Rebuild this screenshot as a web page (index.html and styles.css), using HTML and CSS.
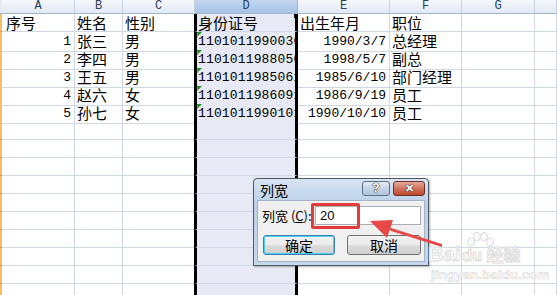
FILE: index.html
```html
<!DOCTYPE html>
<html lang="zh">
<head>
<meta charset="utf-8">
<title>列宽</title>
<link rel="stylesheet" href="styles.css">
</head>
<body>
<div class="sheet">
  <div class="row head">
    <div class="c rh"></div><div class="c">A</div><div class="c">B</div><div class="c">C</div><div class="c d">D</div><div class="c">E</div><div class="c">F</div><div class="c">G</div><div class="c"></div>
  </div>
  <div class="row">
    <div class="c rh"></div><div class="c a">序号</div><div class="c">姓名</div><div class="c">性别</div><div class="c d first">身份证号</div><div class="c">出生年月</div><div class="c">职位</div><div class="c"></div><div class="c"></div>
  </div>
  <div class="row">
    <div class="c rh"></div><div class="c a num r">1</div><div class="c">张三</div><div class="c">男</div><div class="c d num mark">1101011990030</div><div class="c num r">1990/3/7</div><div class="c">总经理</div><div class="c"></div><div class="c"></div>
  </div>
  <div class="row">
    <div class="c rh"></div><div class="c a num r">2</div><div class="c">李四</div><div class="c">男</div><div class="c d num mark">1101011988050</div><div class="c num r">1998/5/7</div><div class="c">副总</div><div class="c"></div><div class="c"></div>
  </div>
  <div class="row">
    <div class="c rh"></div><div class="c a num r">3</div><div class="c">王五</div><div class="c">男</div><div class="c d num mark">1101011985061</div><div class="c num r">1985/6/10</div><div class="c">部门经理</div><div class="c"></div><div class="c"></div>
  </div>
  <div class="row">
    <div class="c rh"></div><div class="c a num r">4</div><div class="c">赵六</div><div class="c">女</div><div class="c d num mark">1101011986091</div><div class="c num r">1986/9/19</div><div class="c">员工</div><div class="c"></div><div class="c"></div>
  </div>
  <div class="row">
    <div class="c rh"></div><div class="c a num r">5</div><div class="c">孙七</div><div class="c">女</div><div class="c d num mark">1101011990101</div><div class="c num r">1990/10/10</div><div class="c">员工</div><div class="c"></div><div class="c"></div>
  </div>
  <div class="row"><div class="c rh"></div><div class="c"></div><div class="c"></div><div class="c"></div><div class="c d"></div><div class="c"></div><div class="c"></div><div class="c"></div><div class="c"></div></div>
  <div class="row"><div class="c rh"></div><div class="c"></div><div class="c"></div><div class="c"></div><div class="c d"></div><div class="c"></div><div class="c"></div><div class="c"></div><div class="c"></div></div>
  <div class="row"><div class="c rh"></div><div class="c"></div><div class="c"></div><div class="c"></div><div class="c d"></div><div class="c"></div><div class="c"></div><div class="c"></div><div class="c"></div></div>
  <div class="row"><div class="c rh"></div><div class="c"></div><div class="c"></div><div class="c"></div><div class="c d"></div><div class="c"></div><div class="c"></div><div class="c"></div><div class="c"></div></div>
  <div class="row"><div class="c rh"></div><div class="c"></div><div class="c"></div><div class="c"></div><div class="c d"></div><div class="c"></div><div class="c"></div><div class="c"></div><div class="c"></div></div>
  <div class="row"><div class="c rh"></div><div class="c"></div><div class="c"></div><div class="c"></div><div class="c d"></div><div class="c"></div><div class="c"></div><div class="c"></div><div class="c"></div></div>
  <div class="row"><div class="c rh"></div><div class="c"></div><div class="c"></div><div class="c"></div><div class="c d"></div><div class="c"></div><div class="c"></div><div class="c"></div><div class="c"></div></div>
  <div class="row"><div class="c rh"></div><div class="c"></div><div class="c"></div><div class="c"></div><div class="c d"></div><div class="c"></div><div class="c"></div><div class="c"></div><div class="c"></div></div>
  <div class="row"><div class="c rh"></div><div class="c"></div><div class="c"></div><div class="c"></div><div class="c d"></div><div class="c"></div><div class="c"></div><div class="c"></div><div class="c"></div></div>
  <div class="row"><div class="c rh"></div><div class="c"></div><div class="c"></div><div class="c"></div><div class="c d"></div><div class="c"></div><div class="c"></div><div class="c"></div><div class="c"></div></div>
</div>

<div class="dialog">
  <div class="titlebar">
    <span class="title">列宽</span>
    <div class="tb-btns">
      <span class="tb-btn help">?</span>
      <span class="tb-btn close">✕</span>
    </div>
  </div>
  <div class="client">
    <div class="field">
      <span class="label">列宽 (<u>C</u>):</span>
      <div class="input">20</div>
    </div>
    <div class="actions">
      <button class="btn ok">确定</button>
      <button class="btn cancel">取消</button>
    </div>
  </div>
  <div class="highlight"></div>
</div>

<svg class="arrow" width="557" height="295" viewBox="0 0 557 295">
  <polygon points="370,221 393,220 387,238" fill="#e84848"/>
  <polygon points="388,227 391,231 442,247 442,244" fill="#e84848"/>
</svg>

<div class="watermark">
  <svg class="paw" width="30" height="26" viewBox="0 0 30 26">
    <g fill="#fbfbfb" stroke="#e0e0e0" stroke-width="1.2">
      <ellipse cx="6" cy="10" rx="3.5" ry="4"/>
      <ellipse cx="12" cy="4.5" rx="3.5" ry="4"/>
      <ellipse cx="19" cy="4.5" rx="3.5" ry="4"/>
      <ellipse cx="25" cy="10" rx="3.5" ry="4"/>
    </g>
  </svg>
  <div class="wm-main"><span class="bai">Bai</span><span class="du">du</span><span class="jy">经验</span></div>
  <div class="wm-url">jingyan.baidu.com</div>
</div>
</body>
</html>
```

FILE: styles.css
```css
html, body {
  margin: 0;
  padding: 0;
  background: #fff;
  overflow: hidden;
}
body {
  width: 557px;
  height: 295px;
  position: relative;
  font-family: "Noto Sans CJK SC", "Liberation Sans", sans-serif;
}
.sheet {
  display: flex;
  flex-direction: column;
}
.row {
  display: grid;
  grid-template-columns: 2px 73px 48px 72px 103px 92px 72px 73px 22px;
  height: 18px;
}
.c {
  box-sizing: border-box;
  border-right: 1px solid #d0d7e5;
  border-bottom: 1px solid #d0d7e5;
  font-size: 15px;
  line-height: 17px;
  color: #000;
  padding-left: 2px;
  white-space: nowrap;
}
.c.a { padding-left: 4px; }
.c.r { text-align: right; padding-right: 3px; }
.c.num {
  font-family: "Liberation Mono", monospace;
  font-size: 13px;
  line-height: 19px;
}
.c.rh {
  background: #f7bd66;
  border-right: none;
  border-bottom: 1px solid #e39a38;
  padding: 0;
}
.c.d {
  background: #e7eaf4;
  border-left: 2px solid #000;
  border-right: 3px solid #000;
  box-shadow: -1px 0 0 #000;
  padding-left: 1px;
  position: relative;
}
.c.d.num { letter-spacing: 0.15px; }
.c.d.mark { overflow: hidden; }
.c.d.mark::before {
  content: "";
  position: absolute;
  left: 0;
  top: 0;
  border-top: 5px solid #1f8a1f;
  border-right: 5px solid transparent;
}
.c.d.mark::after {
  content: "";
  position: absolute;
  left: 0;
  top: 1px;
  width: 1px;
  height: 4px;
  background: #d070c0;
}
.c.d.first::after {
  content: "";
  position: absolute;
  right: -3px;
  top: 0;
  width: 4px;
  height: 4px;
  background: #000;
}

/* header row */
.row.head { height: 14px; }
.row.head .c {
  background: linear-gradient(#f5f8fc, #e2e9f3);
  border-right: 1px solid #c5d1e0;
  border-bottom: 1px solid #9eb6ce;
  font-family: "Liberation Mono", monospace;
  font-size: 12px;
  line-height: 13px;
  color: #27415f;
  text-align: center;
  padding: 0;
}
.row.head .c.rh {
  background: #e4eaf3;
  border-right: none;
}
.row.head .c.d {
  background: linear-gradient(#c2d6ef, #a8c3e6);
  border-left: none;
  border-right: 1px solid #9eb6ce;
  box-shadow: none;
}

/* dialog */
.dialog {
  position: absolute;
  left: 253px;
  top: 178px;
  width: 176px;
  height: 88px;
  box-sizing: border-box;
  border: 1px solid #4e5a66;
  border-radius: 4px 4px 0 0;
  background: linear-gradient(#d7e4f3, #bcd0e8 30%, #c5d7ec);
  padding: 0 3px 3px;
  display: flex;
  flex-direction: column;
  box-shadow: 1px 1px 2px rgba(0,0,0,0.3);
}
.titlebar {
  height: 21px;
  display: flex;
  align-items: center;
  justify-content: space-between;
}
.title {
  font-size: 14px;
  line-height: 16px;
  padding-left: 3px;
  color: #000;
}
.tb-btns {
  display: flex;
  gap: 3px;
  margin-top: -2px;
}
.tb-btn {
  box-sizing: border-box;
  height: 15px;
  border: 1px solid #5d6f85;
  border-radius: 3px;
  font-family: "Liberation Sans", sans-serif;
  font-weight: bold;
  font-size: 12px;
  line-height: 13px;
  text-align: center;
  color: #fff;
  text-shadow: 0 0 1px #333, 0 0 1px #333, 0 0 1px #333;
}
.tb-btn.help {
  width: 28px;
  background: linear-gradient(#e4ebf4, #c5d3e4 50%, #b3c5db);
}
.tb-btn.close {
  width: 32px;
  border-color: #6b3028;
  background: linear-gradient(#e9a99b, #d0735f 50%, #c0452c);
  font-size: 11px;
}
.client {
  flex: 1;
  background: #f0f0f0;
  border: 1px solid #a3b3c6;
  display: flex;
  flex-direction: column;
  padding: 5px 3px 0 4px;
  gap: 10px;
}
.field {
  display: flex;
  align-items: center;
  justify-content: space-between;
  height: 19px;
}
.label {
  font-size: 13px;
  line-height: 16px;
  color: #000;
  white-space: nowrap;
}
.label u { text-decoration: underline; }
.input {
  box-sizing: border-box;
  width: 106px;
  height: 19px;
  background: #fff;
  border: 1px solid #abadb3;
  font-family: "Liberation Sans", sans-serif;
  font-size: 13px;
  line-height: 17px;
  padding-left: 4px;
  color: #000;
}
.actions {
  display: flex;
  gap: 12px;
  padding-left: 1px;
}
.btn {
  box-sizing: border-box;
  height: 20px;
  border: 1px solid #707070;
  border-radius: 3px;
  background: linear-gradient(#f2f2f2, #ebebeb 50%, #dddddd 51%, #cfcfcf);
  font-family: "Noto Sans CJK SC", sans-serif;
  font-size: 14px;
  line-height: 16px;
  padding: 0;
  color: #000;
}
.btn.ok {
  width: 72px;
  border-color: #3c7fb1;
  box-shadow: inset 0 0 0 1px #48d0f0;
}
.btn.cancel { width: 74px; }
.highlight {
  position: absolute;
  left: 57px;
  top: 24px;
  width: 49px;
  height: 26px;
  box-sizing: border-box;
  border: 3px solid #e23c3c;
  border-radius: 2px;
}

.arrow {
  position: absolute;
  left: 0;
  top: 0;
  pointer-events: none;
}

/* watermark */
.watermark {
  position: absolute;
  left: 428px;
  top: 232px;
  width: 110px;
}
.paw {
  position: absolute;
  left: 37px;
  top: 0;
}
.wm-main {
  margin-top: 12px;
  display: flex;
  align-items: baseline;
  gap: 1px;
  white-space: nowrap;
  color: #fcfcfc;
  font-family: "Liberation Sans", sans-serif;
  font-weight: bold;
  line-height: 20px;
  -webkit-text-stroke: 1px #dedede;
}
.wm-main .bai { font-size: 21px; }
.wm-main .du { font-size: 17px; margin-right: 3px; }
.wm-main .jy {
  font-family: "Noto Sans CJK SC", sans-serif;
  font-size: 17px;
  font-weight: 700;
}
.wm-url {
  margin-top: 2px;
  margin-left: 3px;
  white-space: nowrap;
  color: #fcfcfc;
  font-family: "Liberation Sans", sans-serif;
  font-weight: bold;
  font-size: 13.5px;
  line-height: 14px;
  -webkit-text-stroke: 0.7px #dedede;
}
```
